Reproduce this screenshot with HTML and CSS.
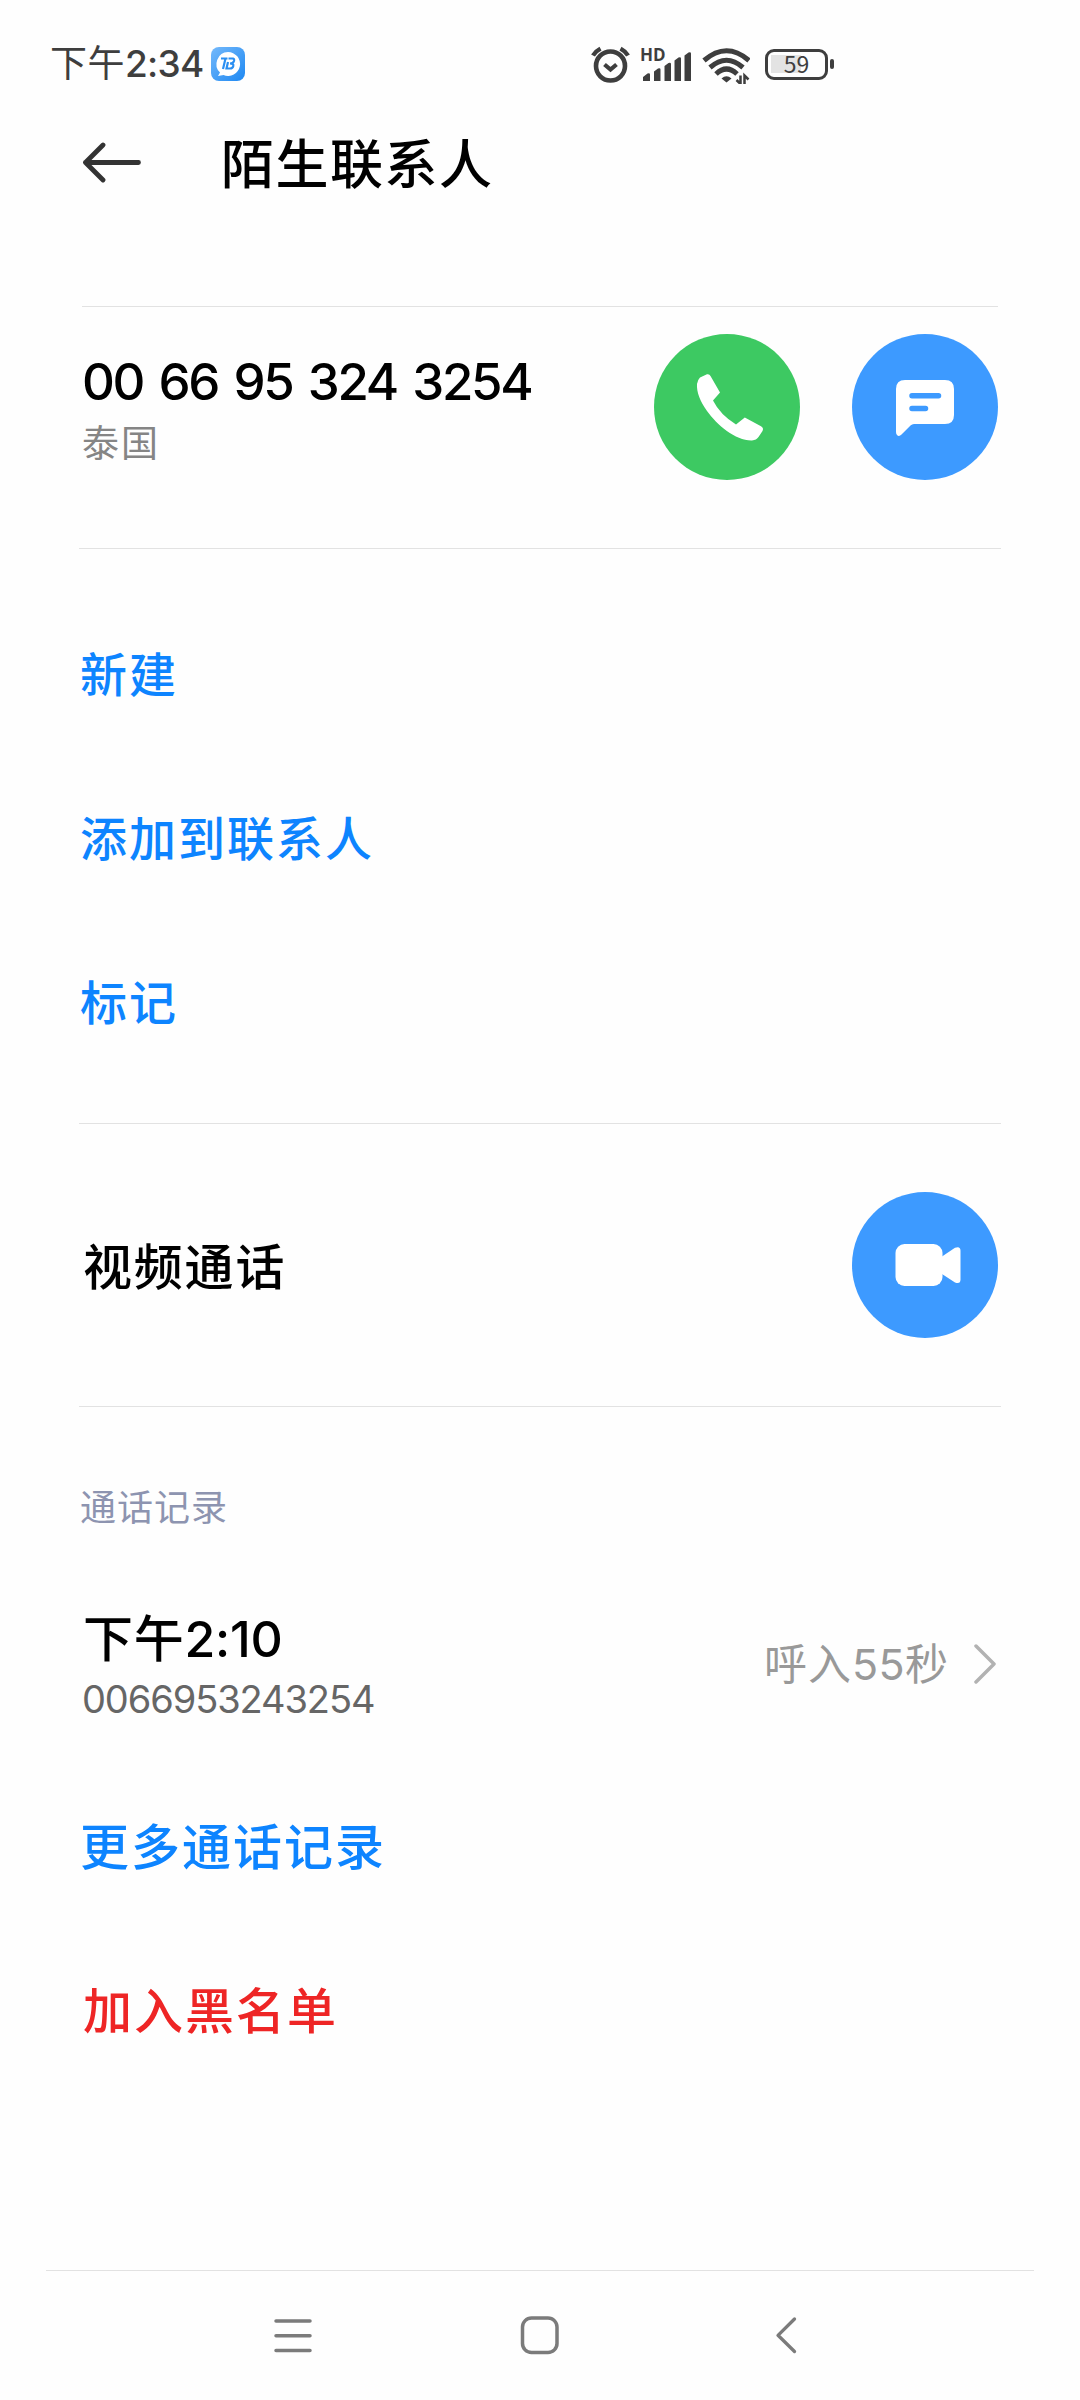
FILE: index.html
```html
<!DOCTYPE html>
<html lang="zh-CN">
<head>
  <meta charset="UTF-8">
  <meta name="viewport" content="width=device-width, initial-scale=1.0">
  <title>陌生联系人</title>
  <link rel="stylesheet" href="styles.css">
</head>
<body>
  <!-- Status bar -->
  <div class="status-bar">
    <span class="clock">下午<span class="digits">2:34</span></span>
    <svg class="app-badge" width="34" height="34" viewBox="0 0 34 34">
      <defs>
        <linearGradient id="badge" x1="0" y1="0" x2="1" y2="1">
          <stop offset="0" stop-color="#74b9fb"/>
          <stop offset="1" stop-color="#1e88f2"/>
        </linearGradient>
      </defs>
      <rect width="34" height="34" rx="8" fill="url(#badge)"/>
      <path d="M17 5a12 12 0 1 1-4.500 23.100L7 29l2-3.500A12 12 0 0 1 17 5z" fill="#fff"/>
      <path d="M10 11.500h6.500M14.500 11.500L12 22M17.500 11.500h4.500q1.500.5 1 2.500-.8 2.500-4 2.500 4 0 3.300 2.500-.6 2.500-3.300 2.500H15.500L17 15" fill="none" stroke="#2b8ff2" stroke-width="2.200"/>
    </svg>

    <div class="status-icons">
      <svg width="42" height="40" viewBox="0 0 42 40" fill="none" stroke="#3e3e3e">
        <circle cx="20.500" cy="22" r="14.500" stroke-width="4.600"/>
        <path d="M3 11.500Q5.500 7.200 10.500 4.600M38 11.500Q35.500 7.200 30.500 4.600" stroke-width="4.400"/>
        <path d="M14.500 20.500l6 5 6-5" stroke-width="4.200"/>
      </svg>
      <div class="signal">
        <span class="hd">HD</span>
        <svg width="50" height="40" viewBox="0 0 50 40" fill="#3e3e3e">
          <path d="M1 37v-4l4.500-3.500q2.500-.8 2.500 1V37zM12 37V27.500l4-3q2.500-.8 2.500 1V37zM22.500 37V22l4-3q2.500-.8 2.500 1V37zM32.500 37V16.500l4-3q2.500-.8 2.500 1V37zM42.500 37V11.500l4-3q2.500-.8 2.500 1V37z"/>
        </svg>
      </div>
      <svg class="wifi" width="48" height="40" viewBox="0 0 48 40">
        <path d="M2 16.500Q24.500-3 47 16.500M8 23.500Q24.500 9 41 23.500M14 30Q24.500 20 35 30" fill="none" stroke="#3e3e3e" stroke-width="5"/>
        <path d="M19.500 34.500Q24.500 30 29.500 34.500l-5 4z" fill="#3e3e3e"/>
        <path d="M38.500 31.500v8.500l-4-4M42.500 40v-8.500l4 4" fill="none" stroke="#3e3e3e" stroke-width="2.500"/>
      </svg>
      <div class="battery">
        <span class="battery-level">59</span>
      </div>
      <i class="battery-cap"></i>
    </div>
  </div>

  <!-- Header -->
  <header class="header">
    <svg width="60" height="42" viewBox="0 0 60 42" fill="none" stroke="#333" stroke-width="4.800" stroke-linecap="round" stroke-linejoin="round">
      <path d="M22 3L4.500 20.500 22 38M4.500 20.500h53"/>
    </svg>
    <h1>陌生联系人</h1>
  </header>

  <main>
    <section class="number-row">
      <div class="number-info">
        <div class="number digits">00 66 95 324 3254</div>
        <div class="region">泰国</div>
      </div>
      <a class="round call" href="#">
        <svg width="146" height="146" viewBox="0 0 146 146" fill="#fff">
          <path d="M46 43.500L53 40.300Q55.500 39.800 56.500 42L66 58.500 59 66.500Q66 80.500 82 90.500L90.800 83.500 107 92.300Q110 94 108.500 97L104.500 103Q102.500 106 98 106.500C82 107 63 91 53 77 46 67 42.500 58 43 50Q43.500 46 46 43.500z"/>
        </svg>
      </a>
      <a class="round message" href="#">
        <svg width="146" height="146" viewBox="0 0 146 146">
          <path d="M53 46h40q9 0 9 9v26q0 9-9 9H62q-2 0-3.500 1.500l-9 9Q47 103 45 101q-1-1-1-3V55q0-9 9-9z" fill="#fff"/>
          <path d="M60 61.700h26.500M60 74.500h13.500" stroke="#3d9aff" stroke-width="5.500" stroke-linecap="round"/>
        </svg>
      </a>
    </section>

    <section class="actions">
      <a href="#">新建</a>
      <a href="#">添加到联系人</a>
      <a href="#">标记</a>
    </section>

    <section class="video-row">
      <span class="video-label">视频通话</span>
      <a class="round message" href="#">
        <svg width="146" height="146" viewBox="0 0 146 146" fill="#fff">
          <rect x="43.500" y="52" width="47" height="42" rx="9"/>
          <path d="M90 64.500l13-8.800q5.500-2 5.500 3V87.500q0 5-5.500 3L90 82z"/>
        </svg>
      </a>
    </section>

    <!-- Call history -->
    <section class="history">
      <h2>通话记录</h2>
      <div class="record">
        <div class="record-info">
          <div class="record-time">下午<span class="digits">2:10</span></div>
          <div class="record-number digits">0066953243254</div>
        </div>
        <span class="record-type">呼入<span class="digits">55</span>秒</span>
        <svg width="24" height="42" viewBox="0 0 24 42" fill="none" stroke="#b2b2b2" stroke-width="3.500" stroke-linecap="round" stroke-linejoin="round">
          <path d="M2 3l18 18L2 39"/>
        </svg>
      </div>
      <a class="more" href="#">更多通话记录</a>
      <a class="block" href="#">加入黑名单</a>
    </section>
  </main>

  <!-- System navigation -->
  <nav class="nav-bar">
    <svg width="40" height="40" viewBox="0 0 40 40" fill="none" stroke="#7b7b7b" stroke-width="3.500" stroke-linecap="round">
      <path d="M4 5h34M4 19.800h34M4 34.500h34"/>
    </svg>
    <svg width="40" height="40" viewBox="0 0 40 40" fill="none" stroke="#7b7b7b" stroke-width="3.500">
      <rect x="2.500" y="2" width="34.500" height="34.500" rx="9"/>
    </svg>
    <svg width="40" height="40" viewBox="0 0 40 40" fill="none" stroke="#7b7b7b" stroke-width="3.300" stroke-linecap="round" stroke-linejoin="round">
      <path d="M26.500 3L10 19.300 26.500 35.500"/>
    </svg>
  </nav>
</body>
</html>
```
FILE: styles.css
```css
* {
  box-sizing: border-box;
}

body {
  margin: 0;
  height: 2400px;
  display: flex;
  flex-direction: column;
  background: #fefefe;
  color: #000;
  font-family: "Noto Sans CJK SC", sans-serif;
  font-weight: 500;
  line-height: 1;
}

svg {
  display: block;
  flex: none;
}

a {
  color: #0d84ff;
  text-decoration: none;
}

h1, h2 {
  margin: 0;
  font-weight: 500;
}

.digits {
  font-family: Inter, "Noto Sans CJK SC", sans-serif;
}

/* Status bar */
.status-bar {
  display: flex;
  align-items: center;
  height: 128px;
  padding: 0 0 0 50px;
  color: #3e3e3e;
}

.clock {
  width: 161px;
  margin-top: -3px;
  font-size: 37px;
  letter-spacing: 0.5px;
  font-weight: 400;
  white-space: nowrap;
}

.clock .digits {
  font-weight: 500;
  letter-spacing: -0.7px;
}

.status-icons {
  display: flex;
  align-items: center;
  margin-left: 345px;
}

.signal {
  position: relative;
  margin: 0 10px;
}

.hd {
  position: absolute;
  left: -2px;
  top: 2px;
  font-family: "Open Sans", sans-serif;
  font-size: 17px;
  font-weight: 700;
}

.battery {
  display: flex;
  align-items: center;
  justify-content: center;
  width: 63px;
  height: 31px;
  margin-left: 15px;
  border: 3.5px solid #3e3e3e;
  border-radius: 9px;
  background: linear-gradient(#e3e3e3, #e3e3e3) 3px center / 30px 18px no-repeat;
}

.battery-level {
  margin-top: -2px;
  font-size: 23px;
  font-weight: 400;
}

.battery-cap {
  width: 4px;
  height: 10px;
  margin-left: 2px;
  border-radius: 2px;
  background: #3e3e3e;
}

/* Header */
.header {
  display: flex;
  align-items: center;
  gap: 80px;
  height: 70px;
  padding-left: 81px;
}

.header h1 {
  margin-top: -3px;
  font-size: 53px;
  letter-spacing: 1.5px;
}

/* Content */
main {
  flex: 1;
  margin: 108px 79px 0;
}

.number-row {
  display: flex;
  height: 242px;
  margin: 0 3px;
  border-top: 1px solid #e2e2e2;
}

.number-info {
  flex: 1;
  padding-top: 49px;
}

.number {
  font-size: 51px;
  letter-spacing: -2.3px;
  word-spacing: 4px;
}

.region {
  margin-top: 16px;
  color: #858585;
  font-size: 37px;
  font-weight: 400;
  letter-spacing: 2px;
}

.round {
  width: 146px;
  height: 146px;
  margin: 27px 0 0 52px;
  border-radius: 50%;
}

.call {
  background: #3dc962;
}

.message {
  background: #3d9aff;
}

.actions {
  display: flex;
  flex-direction: column;
  height: 575px;
  padding: 41px 0 0 1px;
  border-top: 1px solid #e2e2e2;
}

.actions a {
  height: 164px;
  font-size: 47px;
  line-height: 164px;
  letter-spacing: 2px;
}

.video-row {
  display: flex;
  align-items: center;
  justify-content: space-between;
  height: 283px;
  padding: 0 3px;
  border-top: 1px solid #e2e2e2;
}

.video-row .round {
  margin: 0;
}

.video-label {
  margin-top: -4px;
  padding-left: 1px;
  font-size: 49px;
  letter-spacing: 1.8px;
}

/* Call history */
.history {
  padding: 80px 3px 0 1px;
  border-top: 1px solid #e2e2e2;
}

.history h2 {
  color: #8d94b0;
  font-size: 36px;
  font-weight: 400;
  letter-spacing: 1px;
}

.record {
  display: flex;
  align-items: center;
  height: 110px;
  margin-top: 86px;
}

.record-info {
  flex: 1;
  padding-left: 3px;
}

.record-time {
  font-size: 50px;
  letter-spacing: 0.8px;
}

.record-time .digits {
  letter-spacing: -0.3px;
}

.record-number {
  margin: 16px 0 0 -1px;
  color: #666;
  font-size: 38px;
  font-weight: 400;
  letter-spacing: -1.1px;
}

.record-type {
  margin: -2px 25px 0 0;
  color: #999;
  font-size: 43px;
  font-weight: 400;
  letter-spacing: 1px;
}

.record-type .digits {
  letter-spacing: 0.3px;
}

.more,
.block {
  display: block;
  height: 164px;
  font-size: 49px;
  line-height: 164px;
  letter-spacing: 2px;
}

.more {
  margin-top: 43px;
}

.block {
  padding-left: 3px;
  color: #ee2525;
}

/* System navigation */
.nav-bar {
  display: flex;
  justify-content: space-between;
  height: 130px;
  margin: 0 46px;
  padding: 45px 226px 0;
  border-top: 1px solid #e2e2e2;
}
```
